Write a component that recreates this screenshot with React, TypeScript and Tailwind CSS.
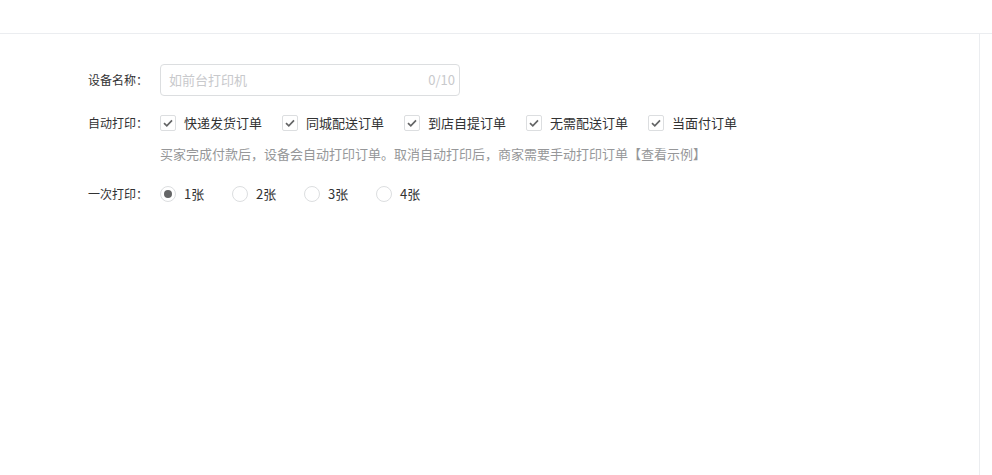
import React from "react";

const font = { fontFamily: '"Noto Sans CJK SC", "Noto Sans", sans-serif' };

function Check({ label }: { label: string }) {
  return (
    <label className="flex items-center mr-[20px]">
      <span className="w-[16px] h-[16px] border border-[#dcdee0] rounded-[2px] flex items-center justify-center bg-white">
        <svg width="10" height="8" viewBox="0 0 10 8">
          <path d="M1 4.2 L3.8 6.8 L9 1.4" fill="none" stroke="#646566" strokeWidth="1.7" />
        </svg>
      </span>
      <span className="ml-[8px] text-[13px] text-[#323233] leading-[16px]">{label}</span>
    </label>
  );
}

function Radio({ label, checked }: { label: string; checked?: boolean }) {
  return (
    <label className="flex items-center w-[72px]">
      <span className="w-[16px] h-[16px] rounded-full border border-[#dcdee0] flex items-center justify-center bg-white">
        {checked && <span className="w-[8px] h-[8px] rounded-full bg-[#646566]" />}
      </span>
      <span className="ml-[8px] text-[13px] text-[#323233] leading-[16px]">{label}</span>
    </label>
  );
}

export default function App() {
  const checks = ["快递发货订单", "同城配送订单", "到店自提订单", "无需配送订单", "当面付订单"];
  return (
    <div className="w-[992px] h-[475px] bg-white flex flex-col overflow-hidden" style={font}>
      <div className="h-[34px] border-b border-[#ebedf0] shrink-0" />
      <div className="flex flex-1">
        <div className="w-[980px] border-r border-[#ebedf0] pt-[30px]">
          <div className="flex items-center h-[32px]">
            <div className="w-[160px] pr-[12px] text-right text-[12px] text-[#323233]">设备名称：</div>
            <div className="w-[300px] h-[32px] border border-[#dcdee0] rounded-[4px] flex items-center pl-[8px] pr-[4px] justify-between">
              <span className="text-[13px] text-[#c8c9cc]">如前台打印机</span>
              <span className="text-[13px] text-[#c8c9cc]">0/10</span>
            </div>
          </div>
          <div className="flex items-center mt-[19px] h-[16px]">
            <div className="w-[160px] pr-[12px] text-right text-[12px] text-[#323233]">自动打印：</div>
            <div className="flex items-center">
              {checks.map((c) => (
                <Check key={c} label={c} />
              ))}
            </div>
          </div>
          <div className="pl-[160px] mt-[15px] text-[13px] text-[#969799] leading-[16px]">
            买家完成付款后，设备会自动打印订单。取消自动打印后，商家需要手动打印订单【查看示例】
          </div>
          <div className="flex items-center mt-[24px] h-[16px]">
            <div className="w-[160px] pr-[12px] text-right text-[12px] text-[#323233]">一次打印：</div>
            <div className="flex items-center">
              <Radio label="1张" checked />
              <Radio label="2张" />
              <Radio label="3张" />
              <Radio label="4张" />
            </div>
          </div>
        </div>
      </div>
    </div>
  );
}
